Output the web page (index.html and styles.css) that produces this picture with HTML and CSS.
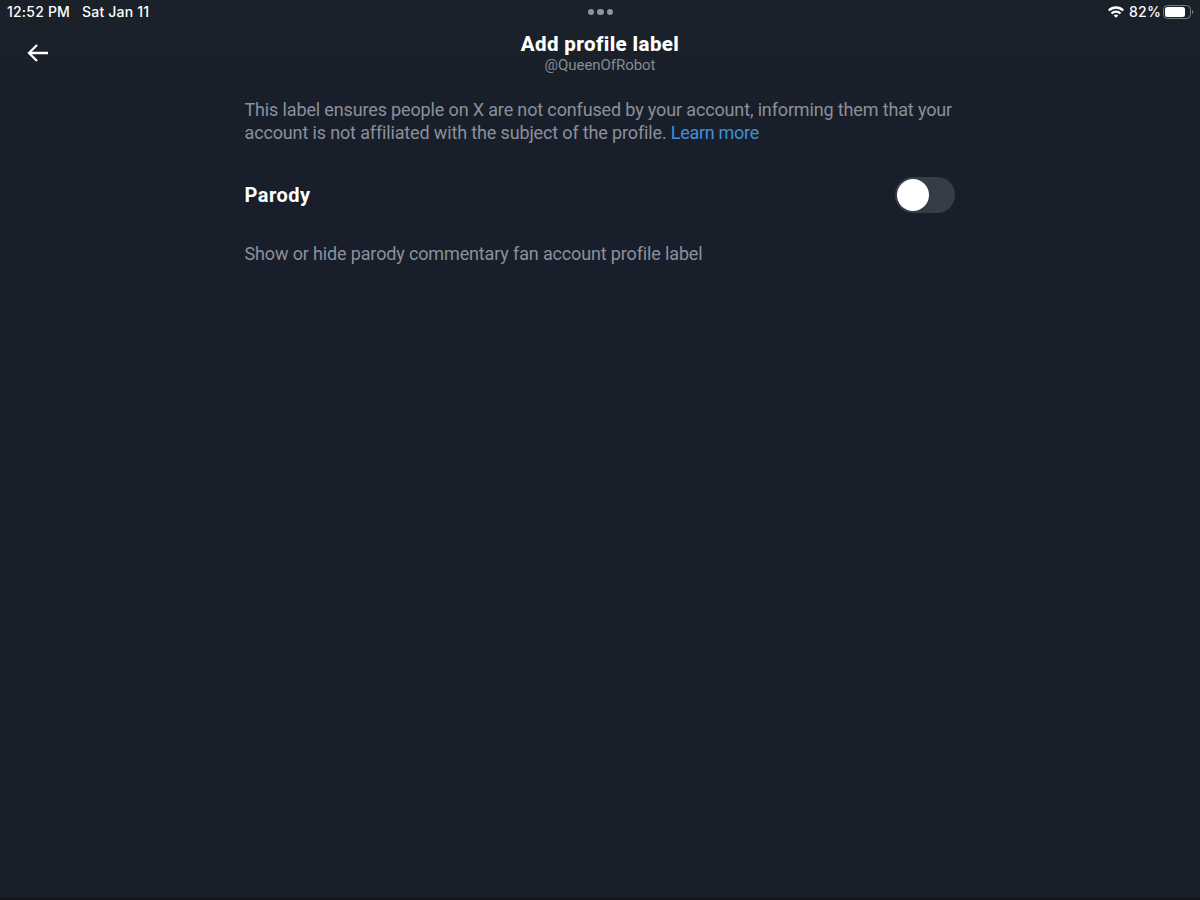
FILE: index.html
```html
<!DOCTYPE html>
<html lang="en">
  <head>
    <meta charset="UTF-8" />
    <meta name="viewport" content="width=device-width, initial-scale=1.0" />
    <title>Add profile label</title>
    <link rel="stylesheet" href="styles.css">
  </head>
  <body>
    <div class="status-bar">
      <div class="status-left">
        <span class="time">12:52 PM</span>
        <span class="date">Sat Jan 11</span>
      </div>
      <div class="dots"><i></i><i></i><i></i></div>
      <div class="status-right">
        <svg class="wifi" width="16" height="12" viewBox="0 0 16 12" fill="none" stroke="#fff" stroke-width="2.3">
          <path d="M0.8 4.5a10.2 10.2 0 0 1 14.4 0" />
          <path d="M3.5 7.5a6.4 6.4 0 0 1 9 0" />
          <path d="M8 11.8L5.7 9.5a3.3 3.3 0 0 1 4.6 0z" fill="#fff" stroke="none" />
        </svg>
        <span class="percent">82%</span>
        <svg class="battery" width="31" height="14" viewBox="0 0 31 14">
          <rect x="0.5" y="0.5" width="27" height="13" rx="4" fill="none" stroke="#777c83" />
          <rect x="2" y="2" width="20" height="10" rx="2.5" fill="#fff" />
          <path d="M29 4.8c1.8 0.7 1.8 3.7 0 4.4z" fill="#777c83" />
        </svg>
      </div>
    </div>

    <header class="header">
      <button class="back" aria-label="Back">
        <svg width="22" height="20" viewBox="0 0 22 20" fill="none" stroke="#fff" stroke-width="2.3">
          <path d="M10 2L2 10l8 8M2.2 10H21" />
        </svg>
      </button>
      <div class="titles">
        <h1>Add profile label</h1>
        <div class="handle">@QueenOfRobot</div>
      </div>
    </header>

    <main class="content">
      <p class="intro">
        <span class="line">This label ensures people on X are not confused by your account, informing them that your</span>
        <span class="line">account is not affiliated with the subject of the profile. <a href="#">Learn more</a></span>
      </p>
      <div class="setting">
        <h2>Parody</h2>
        <button class="toggle" role="switch" aria-checked="false" aria-label="Parody"><span class="knob"></span></button>
      </div>
      <p class="hint">Show or hide parody commentary fan account profile label</p>
    </main>
    <div class="bottom-edge"></div>
  </body>
</html>
```

FILE: styles.css
```css
* {
  box-sizing: border-box;
}

body {
  margin: 0;
  height: 100vh;
  display: flex;
  flex-direction: column;
  overflow: hidden;
  background: linear-gradient(#1a2129, #191f2a 110px);
  color: #fff;
  font-family: Roboto, "Liberation Sans", sans-serif;
}

h1,
h2,
p {
  margin: 0;
}

button {
  border: none;
  padding: 0;
  background: none;
  cursor: pointer;
}

.status-bar {
  display: grid;
  grid-template-columns: 1fr auto 1fr;
  align-items: center;
  height: 24px;
  padding: 0 6px 0 7px;
  font-family: Inter, sans-serif;
  font-size: 14px;
  font-weight: 500;
  line-height: 24px;
}

.status-left {
  display: flex;
  gap: 12px;
}

.time {
  letter-spacing: 0.2px;
}

.date {
  letter-spacing: 0.2px;
}

.dots {
  display: flex;
  gap: 3px;
}

.dots i {
  width: 6.5px;
  height: 6.5px;
  border-radius: 50%;
  background: #90949c;
}

.status-right {
  display: flex;
  justify-content: flex-end;
  align-items: center;
}

.percent {
  margin: 0 2px 0 5px;
  letter-spacing: 0.2px;
}

.header {
  display: grid;
  grid-template-columns: 76px 1fr 76px;
  height: 57px;
}

.back {
  display: flex;
  align-items: center;
  justify-content: center;
  height: 57px;
}

.titles {
  text-align: center;
}

h1 {
  margin-top: 8px;
  font-size: 20.5px;
  font-weight: 800;
  letter-spacing: 0.4px;
  line-height: 24px;
}

.handle {
  color: #858b95;
  font-size: 15px;
  letter-spacing: -0.05px;
  line-height: 19px;
}

.content {
  flex: 1;
  width: 711px;
  margin: 0 auto;
  padding-top: 17px;
}

.intro,
.hint {
  color: #8b909b;
  font-size: 18px;
  letter-spacing: -0.145px;
  line-height: 23px;
}

.line {
  display: block;
  white-space: nowrap;
}

.intro a {
  color: #438fd5;
  letter-spacing: -0.3px;
  text-decoration: none;
}

.setting {
  display: flex;
  justify-content: space-between;
  align-items: center;
  height: 36px;
  margin-top: 33px;
}

h2 {
  font-size: 20px;
  font-weight: 700;
  letter-spacing: 0.5px;
  line-height: 24px;
}

.toggle {
  display: flex;
  align-items: center;
  width: 60px;
  height: 36px;
  margin-right: 1px;
  padding-left: 2px;
  border-radius: 18px;
  background: #373d47;
}

.knob {
  width: 32px;
  height: 32px;
  border-radius: 50%;
  background: #fff;
}

.hint {
  margin-top: 29px;
}

.bottom-edge {
  height: 3px;
  background: #151620;
}
```
